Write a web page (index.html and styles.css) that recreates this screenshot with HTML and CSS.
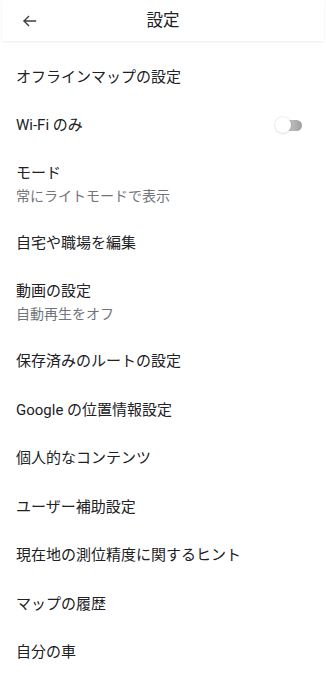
FILE: index.html
```html
<!DOCTYPE html>
<html lang="ja">
<head>
<meta charset="utf-8">
<title>設定</title>
<link rel="stylesheet" href="styles.css">
</head>
<body>
<header class="appbar">
  <button class="back" aria-label="戻る">
    <svg width="16" height="16" viewBox="0 0 16 16" aria-hidden="true">
      <path d="M14.5 8H3M7.5 3.5L3 8l4.5 4.5" fill="none" stroke="#3c4043" stroke-width="1.4" stroke-linecap="square"/>
    </svg>
  </button>
  <h1 class="title">設定</h1>
</header>
<ul class="list">
  <li class="row"><span class="label">オフラインマップの設定</span></li>
  <li class="row row-switch"><span class="label">Wi-Fi のみ</span><span class="switch"><span class="thumb"></span></span></li>
  <li class="row row-two"><span class="label">モード</span><span class="sub">常にライトモードで表示</span></li>
  <li class="row"><span class="label">自宅や職場を編集</span></li>
  <li class="row row-two"><span class="label">動画の設定</span><span class="sub">自動再生をオフ</span></li>
  <li class="row"><span class="label">保存済みのルートの設定</span></li>
  <li class="row"><span class="label">Google の位置情報設定</span></li>
  <li class="row"><span class="label">個人的なコンテンツ</span></li>
  <li class="row"><span class="label">ユーザー補助設定</span></li>
  <li class="row"><span class="label">現在地の測位精度に関するヒント</span></li>
  <li class="row"><span class="label">マップの履歴</span></li>
  <li class="row"><span class="label">自分の車</span></li>
</ul>
</body>
</html>
```
FILE: styles.css
```css
* { box-sizing: border-box; }
html, body { margin: 0; padding: 0; background: #fff; }
body {
  font-family: Roboto, "Noto Sans CJK JP", sans-serif;
  color: #202124;
  width: 326px;
  overflow: hidden;
}
.appbar {
  height: 41px;
  display: flex;
  align-items: center;
  justify-content: center;
  position: relative;
  box-shadow: 0 1px 2px rgba(0,0,0,0.08);
  margin: 0 2px;
}
.back {
  position: absolute;
  left: 18px;
  top: 12px;
  width: 18px;
  height: 18px;
  padding: 0;
  border: 0;
  background: none;
  display: flex;
  align-items: center;
  justify-content: center;
}
.title {
  margin: 0;
  font-size: 16.5px;
  font-weight: 400;
  line-height: 20px;
  color: #202124;
}
.list {
  list-style: none;
  margin: 0;
  padding: 11.5px 0 0;
}
.row {
  display: flex;
  flex-direction: column;
  padding: 14px 16px;
  font-size: 15px;
  line-height: 20.5px;
}
.row-two { padding: 13px 16px 12px; }
.row-switch {
  flex-direction: row;
  align-items: center;
  justify-content: space-between;
}
.label { color: #202124; }
.sub {
  margin-top: 3px;
  font-size: 14px;
  line-height: 21px;
  color: #70757a;
}
.switch {
  position: relative;
  width: 25px;
  height: 11px;
  margin-right: 8px;
  border-radius: 6px;
  background: linear-gradient(90deg, #e6e6e6 0%, #bdbdbd 55%, #9e9e9e 100%);
}
.thumb {
  position: absolute;
  left: -2px;
  top: -2.5px;
  width: 16px;
  height: 16px;
  border-radius: 50%;
  background: #fff;
  box-shadow: 0 0 2px rgba(0,0,0,0.18), 0 1px 2px rgba(0,0,0,0.08);
}
```
